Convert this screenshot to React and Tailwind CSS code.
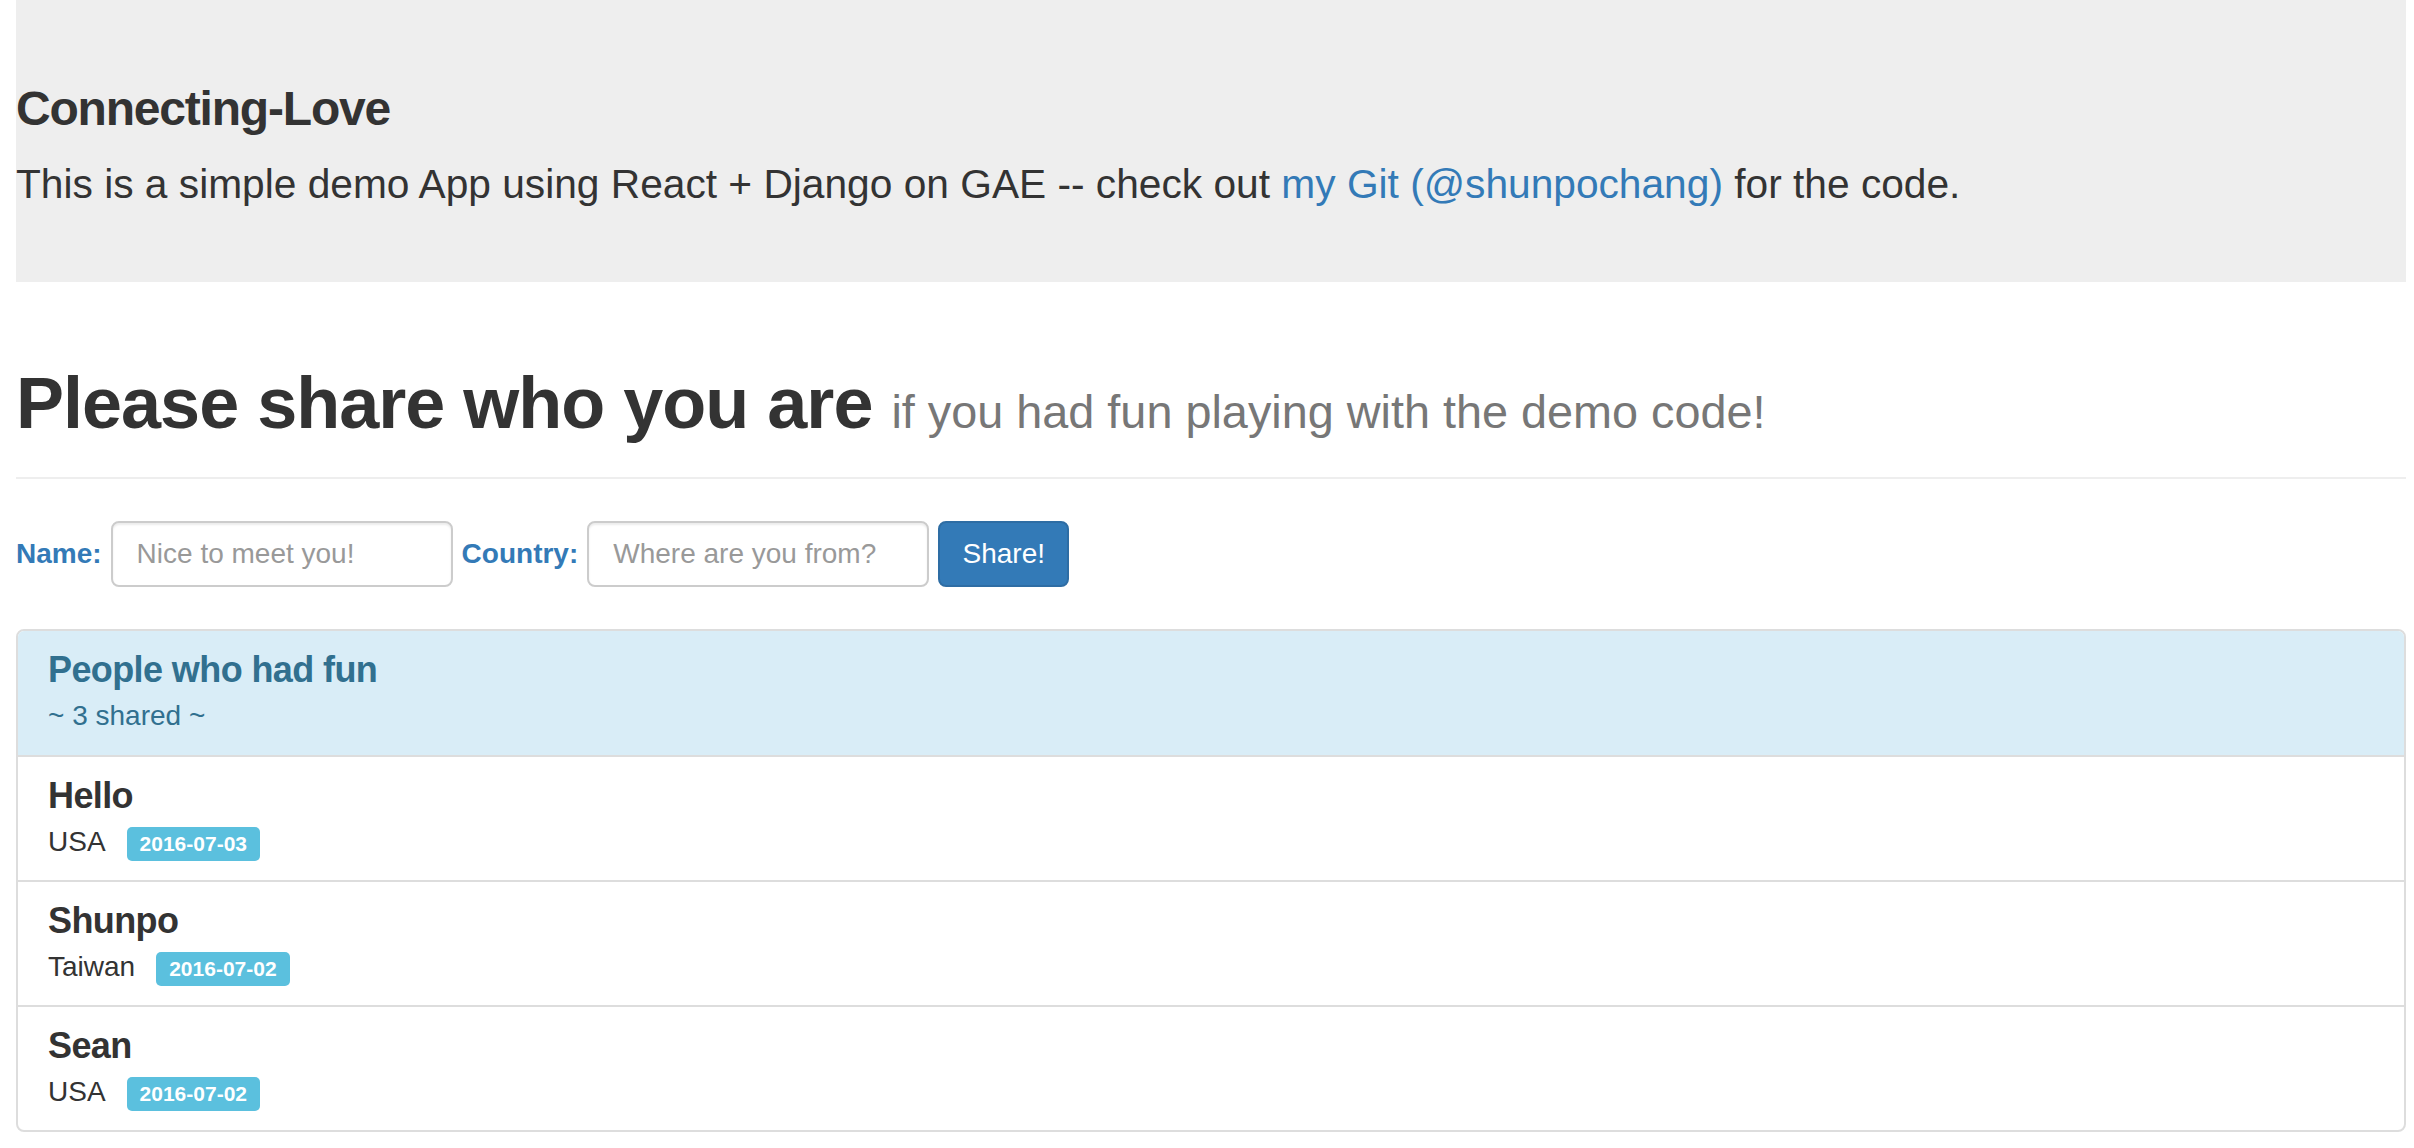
import React, { useState } from 'react';

const people = [
  { name: 'Hello', country: 'USA', date: '2016-07-03' },
  { name: 'Shunpo', country: 'Taiwan', date: '2016-07-02' },
  { name: 'Sean', country: 'USA', date: '2016-07-02' },
];

const App = () => {
  const [name, setName] = useState('');
  const [country, setCountry] = useState('');

  return (
    <div className="min-h-screen bg-white pl-[16px] pr-[8px] font-['Liberation_Sans',Arial,sans-serif] text-[#333]">
      {/* Jumbotron */}
      <div className="bg-[#eeeeee] pt-[83px] pb-[68px]">
        <h3 className="text-[48px] font-bold leading-[52px] tracking-[-1.2px]">Connecting-Love</h3>
        <p className="mt-[19px] text-[40.7px] leading-[60px]">
          This is a simple demo App using React + Django on GAE -- check out{' '}
          <a href="#" className="text-[#337ab7]">my Git (@shunpochang)</a> for the code.
        </p>
      </div>

      {/* Page header */}
      <div className="mt-[81px] border-b-2 border-[#eeeeee] pb-[34px]">
        <h1 className="text-[72px] font-bold leading-[80px] tracking-[-1px]">
          Please share who you are{' '}
          <small className="text-[46.8px] font-normal leading-none tracking-normal text-[#777]">if you had fun playing with the demo code!</small>
        </h1>
      </div>

      {/* Form */}
      <form className="mt-[42px] flex items-center gap-[9px]" onSubmit={(e) => e.preventDefault()}>
        <label className="text-[28px] font-bold leading-[40px] text-[#337ab7]">Name:</label>
        <input
          value={name}
          onChange={(e) => setName(e.target.value)}
          placeholder="Nice to meet you!"
          className="h-[66px] w-[342px] rounded-[8px] border-2 border-[#cccccc] px-[24px] text-[28px] shadow-[inset_0_2px_2px_rgba(0,0,0,0.075)] outline-none placeholder:text-[#999]"
        />
        <label className="text-[28px] font-bold leading-[40px] text-[#337ab7]">Country:</label>
        <input
          value={country}
          onChange={(e) => setCountry(e.target.value)}
          placeholder="Where are you from?"
          className="h-[66px] w-[342px] rounded-[8px] border-2 border-[#cccccc] px-[24px] text-[28px] shadow-[inset_0_2px_2px_rgba(0,0,0,0.075)] outline-none placeholder:text-[#999]"
        />
        <button type="submit" className="h-[66px] w-[131px] rounded-[8px] border-2 border-[#2e6da4] bg-[#337ab7] text-[28px] text-white">
          Share!
        </button>
      </form>

      {/* Panel */}
      <div className="mt-[42px] overflow-hidden rounded-[8px] border-2 border-[#dddddd]">
        <div className="border-b-2 border-[#dddddd] bg-[#d9edf7] px-[30px] pt-[19px] pb-[19px] text-[#31708f]">
          <h4 className="text-[36px] font-bold leading-[40px] tracking-[-0.6px]">People who had fun</h4>
          <div className="mt-[6px] text-[28px] leading-[40px]">~ {people.length} shared ~</div>
        </div>
        {people.map((p, i) => (
          <div key={i} className={`px-[30px] pt-[19px] pb-[18px] ${i < people.length - 1 ? 'border-b-2 border-[#dddddd]' : ''}`}>
            <h4 className="text-[36px] font-bold leading-[40px] tracking-[-0.6px]">{p.name}</h4>
            <div className="mt-[6px] text-[28px] leading-[40px]">
              {p.country}
              <span className="ml-[21px] inline-block rounded-[5px] bg-[#5bc0de] px-[13px] pt-[6px] pb-[7px] align-baseline text-[21px] font-bold leading-[21px] text-white">
                {p.date}
              </span>
            </div>
          </div>
        ))}
      </div>
    </div>
  );
};

export default App;
